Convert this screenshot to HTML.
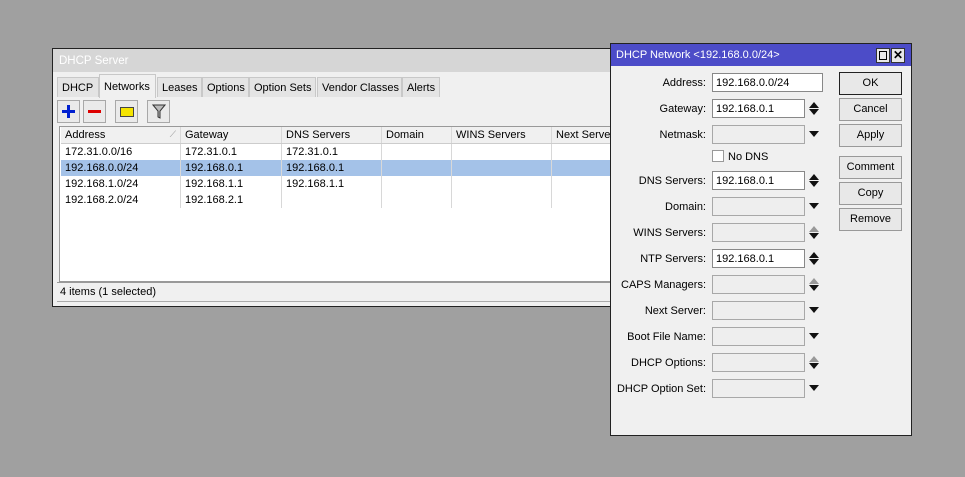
<!DOCTYPE html><html><head><style>
*{margin:0;padding:0;box-sizing:border-box}
body{width:965px;height:477px;background:#a0a0a0;position:relative;overflow:hidden;font-family:"Liberation Sans",sans-serif;font-size:11px;color:#000}
.a{position:absolute}
.win{left:52px;top:48px;width:570px;height:259px;background:#f0f0f0;border:1px solid #222}
.tab{position:absolute;top:77px;height:20px;border:1px solid #c8c8c8;border-bottom:none;background:#e4e4e4;padding:4px 4px 0;white-space:nowrap;overflow:hidden}
.tb{position:absolute;top:100px;width:23px;height:23px;border:1px solid #a8a8a8;background:#eaeaea}
.grid{left:59px;top:126px;width:552px;height:156px;background:#fff;border:1px solid #999;overflow:hidden}
.row{position:absolute;left:1px;height:16px;width:560px}
.c{position:absolute;top:0;height:16px;border-right:1px solid #d8d8d8;padding:2px 4px;white-space:nowrap}
.dlg{left:610px;top:43px;width:302px;height:393px;background:#f0f0f0;border:1px solid #222}
.lbl{position:absolute;left:586px;width:120px;text-align:right;white-space:nowrap}
.fld{position:absolute;left:712px;width:93px;height:19px;border:1px solid #a8a8a8;background:#eeeeee;padding:3px 3px}
.fld.w{background:#fff;border-color:#888}
.btn{position:absolute;left:839px;width:63px;height:23px;border:1px solid #999;background:#e8e8e8;text-align:center;line-height:21px}
.dn{position:absolute;left:809px;width:0;height:0;border-left:5px solid transparent;border-right:5px solid transparent;border-top:6px solid #111}
.ud{position:absolute;left:809px;width:10px;height:13px}
</style></head><body>
<div class="a win"></div>
<div class="a" style="left:53px;top:49px;width:569px;height:23px;background:#d6d6d6;color:#fff;padding:6px 6px;font-size:11.5px">DHCP Server</div>
<div class="tab" style="left:57px;width:42px">DHCP</div>
<div class="tab" style="left:99px;top:74px;height:24px;width:57px;background:#f0f0f0;padding-top:6px">Networks</div>
<div class="tab" style="left:157px;width:45px">Leases</div>
<div class="tab" style="left:202px;width:47px">Options</div>
<div class="tab" style="left:249px;width:67px">Option Sets</div>
<div class="tab" style="left:317px;width:85px">Vendor Classes</div>
<div class="tab" style="left:402px;width:38px">Alerts</div>
<div class="tb" style="left:57px"><div class="a" style="left:9px;top:4px;width:3px;height:13px;background:#0020d0"></div><div class="a" style="left:4px;top:9px;width:13px;height:3px;background:#0020d0"></div></div>
<div class="tb" style="left:83px"><div class="a" style="left:4px;top:9px;width:13px;height:3px;background:#d00"></div></div>
<div class="tb" style="left:115px"><div class="a" style="left:4px;top:6px;width:14px;height:10px;background:#f4e400;border:1px solid #444"></div></div>
<div class="tb" style="left:147px"><svg class="a" style="left:4px;top:3px" width="14" height="16"><path d="M1 1H13L8 7V14L6 13V7Z" fill="#bbb" stroke="#333"/></svg></div>
<div class="a grid">
<div class="row" style="top:0;background:#f0f0f0;border-bottom:1px solid #ccc;height:17px"><div class="c" style="left:0;width:120px">Address<span style="position:absolute;right:4px;color:#999;font-size:9px">⟋</span></div><div class="c" style="left:120px;width:101px">Gateway</div><div class="c" style="left:221px;width:100px">DNS Servers</div><div class="c" style="left:321px;width:70px">Domain</div><div class="c" style="left:391px;width:100px">WINS Servers</div><div class="c" style="left:491px;width:70px">Next Server</div></div>
<div class="row" style="top:17px"><div class="c" style="left:0;width:120px">172.31.0.0/16</div><div class="c" style="left:120px;width:101px">172.31.0.1</div><div class="c" style="left:221px;width:100px">172.31.0.1</div><div class="c" style="left:321px;width:70px"></div><div class="c" style="left:391px;width:100px"></div></div>
<div class="row" style="top:33px;background:#a4c2e8"><div class="c" style="left:0;width:120px">192.168.0.0/24</div><div class="c" style="left:120px;width:101px">192.168.0.1</div><div class="c" style="left:221px;width:100px">192.168.0.1</div><div class="c" style="left:321px;width:70px"></div><div class="c" style="left:391px;width:100px"></div></div>
<div class="row" style="top:49px"><div class="c" style="left:0;width:120px">192.168.1.0/24</div><div class="c" style="left:120px;width:101px">192.168.1.1</div><div class="c" style="left:221px;width:100px">192.168.1.1</div><div class="c" style="left:321px;width:70px"></div><div class="c" style="left:391px;width:100px"></div></div>
<div class="row" style="top:65px"><div class="c" style="left:0;width:120px">192.168.2.0/24</div><div class="c" style="left:120px;width:101px">192.168.2.1</div><div class="c" style="left:221px;width:100px"></div><div class="c" style="left:321px;width:70px"></div><div class="c" style="left:391px;width:100px"></div></div>
</div>
<div class="a" style="left:57px;top:282px;width:555px;height:20px;border-top:1px solid #999;border-bottom:1px solid #aaa;padding:3px 3px">4 items (1 selected)</div>

<div class="a dlg"></div>
<div class="a" style="left:611px;top:44px;width:300px;height:22px;background:#4c4cc8;color:#fff;padding:5px 5px">DHCP Network &lt;192.168.0.0/24&gt;</div>
<div class="a" style="left:876px;top:48px;width:14px;height:15px;background:#e8e8e8;border:1px solid #333"><div class="a" style="left:2px;top:2px;width:8px;height:9px;border:1px solid #000"></div></div>
<div class="a" style="left:891px;top:48px;width:14px;height:15px;background:#e8e8e8;border:1px solid #333;font-size:12px;font-weight:bold;text-align:center;line-height:13px">✕</div>

<div class="lbl" style="top:77px">Address:</div><div class="fld w" style="top:73px;width:111px">192.168.0.0/24</div>
<div class="lbl" style="top:103px">Gateway:</div><div class="fld w" style="top:99px">192.168.0.1</div>
<div class="lbl" style="top:129px">Netmask:</div><div class="fld" style="top:125px"></div>
<div class="a" style="left:712px;top:150px;width:12px;height:12px;border:1px solid #999;background:#fff"></div><div class="a" style="left:728px;top:151px">No DNS</div>
<div class="lbl" style="top:175px">DNS Servers:</div><div class="fld w" style="top:171px">192.168.0.1</div>
<div class="lbl" style="top:201px">Domain:</div><div class="fld" style="top:197px"></div>
<div class="lbl" style="top:227px">WINS Servers:</div><div class="fld" style="top:223px"></div>
<div class="lbl" style="top:253px">NTP Servers:</div><div class="fld w" style="top:249px">192.168.0.1</div>
<div class="lbl" style="top:279px">CAPS Managers:</div><div class="fld" style="top:275px"></div>
<div class="lbl" style="top:305px">Next Server:</div><div class="fld" style="top:301px"></div>
<div class="lbl" style="top:331px">Boot File Name:</div><div class="fld" style="top:327px"></div>
<div class="lbl" style="top:357px">DHCP Options:</div><div class="fld" style="top:353px"></div>
<div class="lbl" style="top:383px">DHCP Option Set:</div><div class="fld" style="top:379px"></div>

<svg class="ud" style="top:102px"><path d="M0 6L5 0L10 6Z M0 7H10L5 13Z" fill="#111"/></svg>
<div class="dn" style="top:131px"></div>
<svg class="ud" style="top:174px"><path d="M0 6L5 0L10 6Z M0 7H10L5 13Z" fill="#111"/></svg>
<div class="dn" style="top:203px"></div>
<svg class="ud" style="top:226px"><path d="M0 6L5 0L10 6Z" fill="#999"/><path d="M0 7H10L5 13Z" fill="#111"/></svg>
<svg class="ud" style="top:252px"><path d="M0 6L5 0L10 6Z M0 7H10L5 13Z" fill="#111"/></svg>
<svg class="ud" style="top:278px"><path d="M0 6L5 0L10 6Z" fill="#999"/><path d="M0 7H10L5 13Z" fill="#111"/></svg>
<div class="dn" style="top:307px"></div>
<div class="dn" style="top:333px"></div>
<svg class="ud" style="top:356px"><path d="M0 6L5 0L10 6Z" fill="#999"/><path d="M0 7H10L5 13Z" fill="#111"/></svg>
<div class="dn" style="top:385px"></div>

<div class="btn" style="top:72px;border:1px solid #222">OK</div>
<div class="btn" style="top:98px">Cancel</div>
<div class="btn" style="top:124px">Apply</div>
<div class="btn" style="top:156px">Comment</div>
<div class="btn" style="top:182px">Copy</div>
<div class="btn" style="top:208px">Remove</div>
</body></html>
